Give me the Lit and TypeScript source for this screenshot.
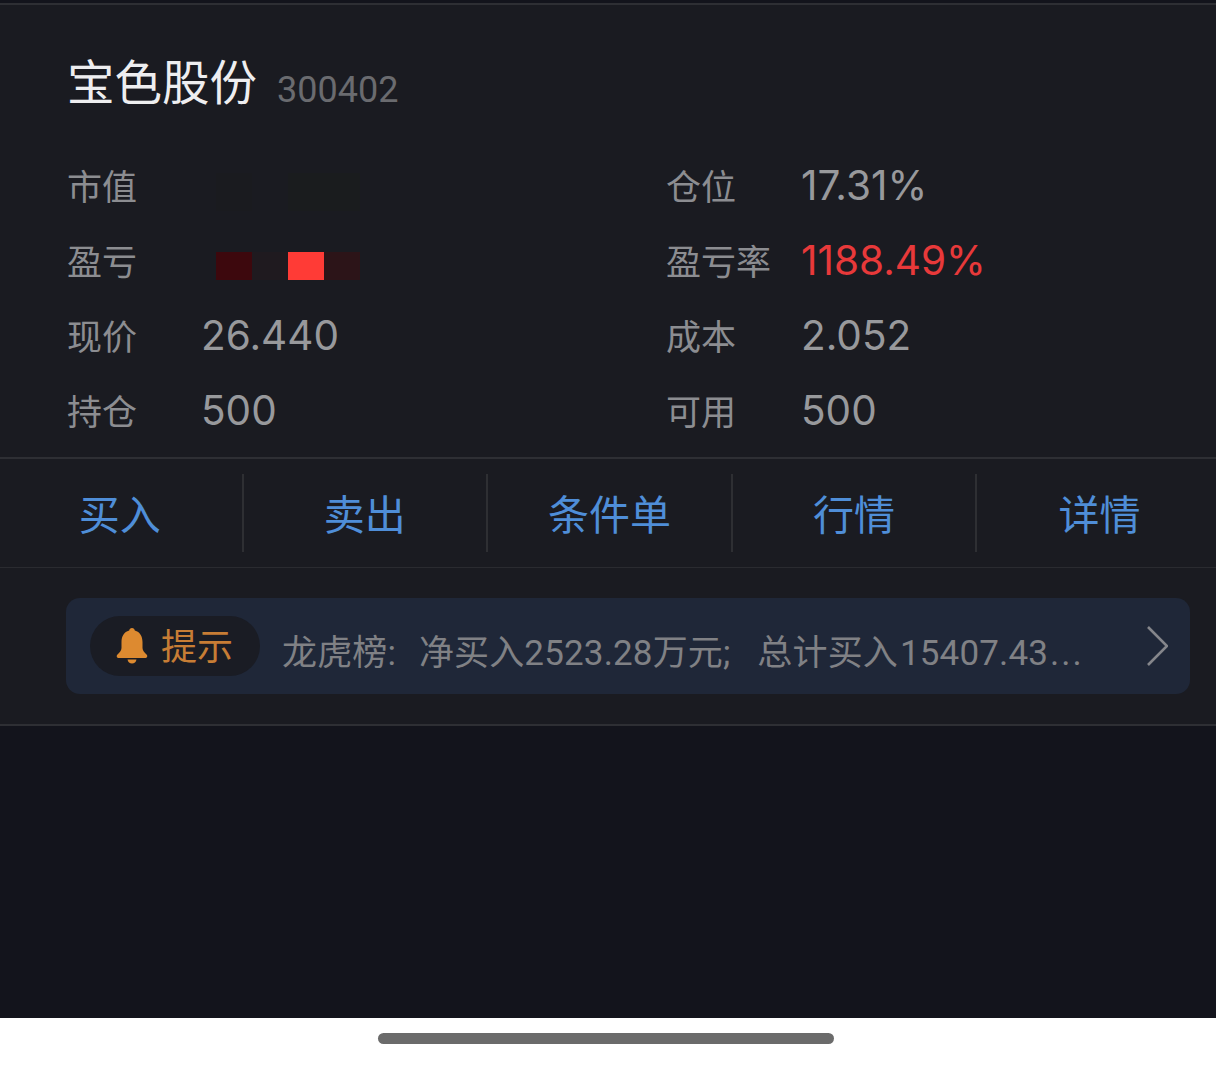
import { LitElement, html, css } from 'lit';
import { customElement } from 'lit/decorators.js';

const left = [
  { label: '市值', masked: 'dim' },
  { label: '盈亏', masked: 'red' },
  { label: '现价', value: '26.440' },
  { label: '持仓', value: '500' },
];
const right = [
  { label: '仓位', value: '17.31%' },
  { label: '盈亏率', value: '1188.49%', up: true },
  { label: '成本', value: '2.052' },
  { label: '可用', value: '500' },
];
const actions = ['买入', '卖出', '条件单', '行情', '详情'];

@customElement('app-root')
export class AppRoot extends LitElement {
  static styles = css`
    :host {
      display: block;
      width: 1216px;
      height: 1066px;
      overflow: hidden;
      background: #fff;
      font-family: Roboto, "Noto Sans CJK SC", sans-serif;
    }
    .screen {
      height: 1018px;
      background: #13141c;
      display: flex;
      flex-direction: column;
    }
    .panel {
      margin-top: 3px;
      height: 723px;
      background: #1a1b21;
      border-top: 2px solid #2e2f34;
      border-bottom: 2px solid #2e2f34;
      box-sizing: border-box;
    }
    .head {
      box-sizing: border-box;
      display: flex;
      align-items: center;
      height: 145px;
      padding: 12px 0 0 67px;
      gap: 20px;
    }
    .name {
      font-size: 47.5px;
      line-height: 60px;
      color: #eeeef0;
    }
    .code {
      font-size: 36px;
      line-height: 44px;
      color: #6a6b6f;
      margin-top: 12px;
    }
    .stats {
      height: 307px;
      display: grid;
      grid-template-columns: 599px 1fr;
      padding-left: 67px;
      box-sizing: border-box;
    }
    .row {
      height: 75px;
      display: flex;
      align-items: center;
    }
    .label {
      width: 134px;
      flex: none;
      font-size: 35px;
      line-height: 75px;
      color: #8c8d91;
      margin-top: 2px;
    }
    .right .label {
      width: 135px;
    }
    .value {
      font-family: Inter, "Noto Sans CJK SC", sans-serif;
      font-size: 40.5px;
      line-height: 75px;
      color: #98999c;
      margin-top: -5px;
    }
    .value.up {
      color: #e8393a;
    }
    .mask {
      display: flex;
      margin-left: 15px;
      height: 28px;
      margin-top: 6px;
    }
    .mask.dim {
      height: 38px;
      margin-top: 8px;
    }
    .mask span {
      width: 36px;
    }
    .dim span:nth-child(1) { background: #1a1b1f; }
    .dim span:nth-child(2) { background: #1a1b21; }
    .dim span:nth-child(3) { background: #1a1c1e; }
    .dim span:nth-child(4) { background: #1a1c1e; }
    .red span:nth-child(1) { background: #3d080d; }
    .red span:nth-child(2) { background: #1f1a1f; }
    .red span:nth-child(3) { background: #ff3b36; }
    .red span:nth-child(4) { background: #2c1418; }
    .actions {
      height: 111px;
      display: flex;
      align-items: center;
      border-top: 2px solid #2e2f34;
      border-bottom: 1px solid #2a2b30;
      box-sizing: border-box;
    }
    .action {
      flex: none;
      width: 244.6px;
      height: 78px;
      box-sizing: border-box;
      border-right: 2px solid #2e2f33;
      text-align: center;
      font-size: 41px;
      line-height: 84px;
      color: #4f8ed8;
    }
    .action:first-child {
      width: 243.500px;
      padding-right: 2px;
    }
    .action:last-child {
      border-right: 0;
    }
    .tip {
      margin: 30px 26px 0 66px;
      height: 96px;
      border-radius: 14px;
      background: #1f2738;
      display: flex;
      align-items: center;
      padding: 0 22px 0 24px;
    }
    .badge {
      flex: none;
      width: 170px;
      height: 60px;
      border-radius: 30px;
      background: #1a1c24;
      display: flex;
      align-items: center;
      box-sizing: border-box;
      padding-left: 26px;
      gap: 13px;
      font-size: 36px;
      color: #c77d35;
    }
    .badge svg {
      display: block;
      flex: none;
    }
    .badge span {
      line-height: 60px;
      margin-top: 4px;
    }
    .msg {
      flex: 1;
      min-width: 0;
      margin: 16px 0 0 22px;
      font-size: 35px;
      line-height: 50px;
      color: #808185;
      white-space: nowrap;
      word-spacing: 14px;
      letter-spacing: 0.15px;
    }
    .after-gap {
      margin-left: 4px;
    }
    .num {
      margin-left: 2px;
    }
    .dots {
      letter-spacing: 2px;
      margin-left: 2px;
    }
    .chev {
      display: block;
      flex: none;
    }
    .home {
      height: 48px;
      display: flex;
      justify-content: center;
      padding: 15px 4px 0 0;
      box-sizing: border-box;
    }
    .home i {
      display: block;
      width: 456px;
      height: 11px;
      border-radius: 6px;
      background: #6b6b6b;
    }
  `;

  renderRow(r: any) {
    return html`
      <div class="row">
        <div class="label">${r.label}</div>
        ${r.masked
          ? html`<div class="mask ${r.masked}"><span></span><span></span><span></span><span></span></div>`
          : html`<div class="value ${r.up ? 'up' : ''}">${r.value}</div>`}
      </div>
    `;
  }

  render() {
    return html`
      <div class="screen">
        <div class="panel">
          <div class="head">
            <div class="name">宝色股份</div>
            <div class="code">300402</div>
          </div>
          <div class="stats">
            <div>${left.map((r) => this.renderRow(r))}</div>
            <div class="right">${right.map((r) => this.renderRow(r))}</div>
          </div>
          <div class="actions">
            ${actions.map((a) => html`<div class="action">${a}</div>`)}
          </div>
          <div class="tip">
            <div class="badge">
              <svg width="32" height="36" viewBox="0 0 32 36">
                <path fill="#dd8a30" d="M16 0c1.600 0 2.600 1 2.800 2.600C24 4 26.500 8.500 26.500 14v6c0 2.600 2 4.500 4 6.500 1.500 1.500.8 3.500-1.500 3.500H3c-2.300 0-3-2-1.500-3.500 2-2 4-3.900 4-6.500v-6c0-5.500 2.500-10 7.700-11.400C13.400 1 14.400 0 16 0z"/>
                <path fill="#dd8a30" d="M11.500 31.500h9c-.4 2.500-2.200 4-4.500 4s-4.100-1.500-4.500-4z"/>
              </svg>
              <span>提示</span>
            </div>
            <div class="msg">龙虎榜: 净买入2523.28万元; <span class="after-gap">总计买入</span><span class="num">15407.43</span><span class="dots">...</span></div>
            <svg class="chev" width="24" height="42" viewBox="0 0 24 42">
              <path d="M4 2l19 19L4 40" fill="none" stroke="#85868b" stroke-width="2.600"/>
            </svg>
          </div>
        </div>
      </div>
      <div class="home"><i></i></div>
    `;
  }
}
